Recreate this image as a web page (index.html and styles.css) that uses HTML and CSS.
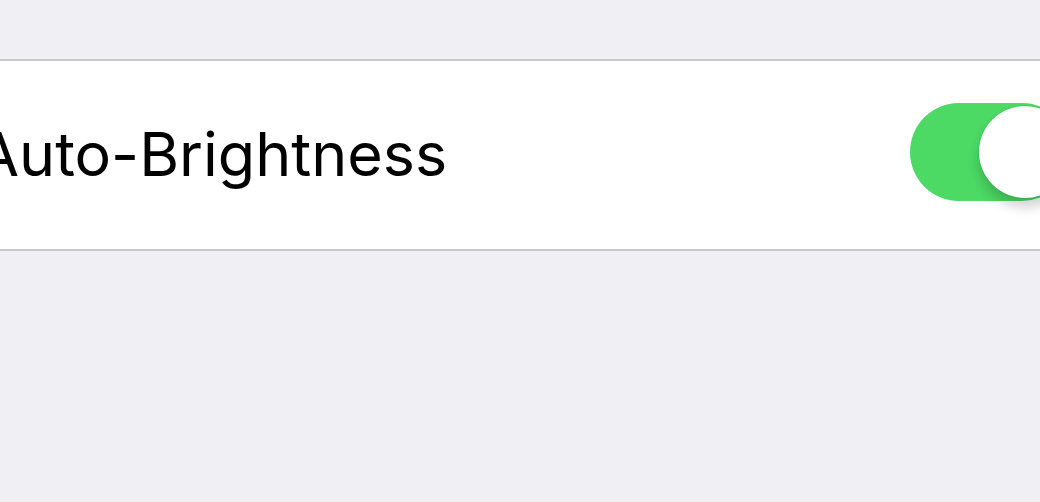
FILE: index.html
```html
<!DOCTYPE html>
<html>
<head>
<meta charset="utf-8">
<link rel="stylesheet" href="styles.css">
</head>
<body>
<div class="page">
  <div class="group">
    <div class="row">
      <span class="label">Auto-Brightness</span>
      <div class="toggle"><div class="knob"></div></div>
    </div>
  </div>
</div>
</body>
</html>
```
FILE: styles.css
```css
html, body {
  margin: 0;
  padding: 0;
  background: #efeff4;
  overflow: hidden;
}
.page {
  width: 1040px;
  height: 502px;
  padding-top: 59px;
  box-sizing: border-box;
}
.group {
  background: #fff;
  border-top: 2px solid #c8c7cc;
  border-bottom: 2px solid #c8c7cc;
}
.row {
  height: 188px;
  display: flex;
  align-items: center;
  justify-content: space-between;
  overflow: hidden;
}
.label {
  font-family: Inter, "Liberation Sans", sans-serif;
  font-size: 61px;
  color: #000;
  margin-left: -23px;
  margin-top: -2px;
  white-space: nowrap;
}
.toggle {
  position: relative;
  width: 161px;
  height: 98px;
  border-radius: 49px;
  background: #4cd964;
  margin-right: -31px;
  margin-top: -6px;
  flex-shrink: 0;
}
.knob {
  position: absolute;
  top: 3px;
  right: 0;
  width: 92px;
  height: 92px;
  border-radius: 50%;
  background: #fff;
  box-shadow: 0 9px 12px rgba(0,0,0,0.18), 0 0 0 1px rgba(0,0,0,0.06);
}
```
